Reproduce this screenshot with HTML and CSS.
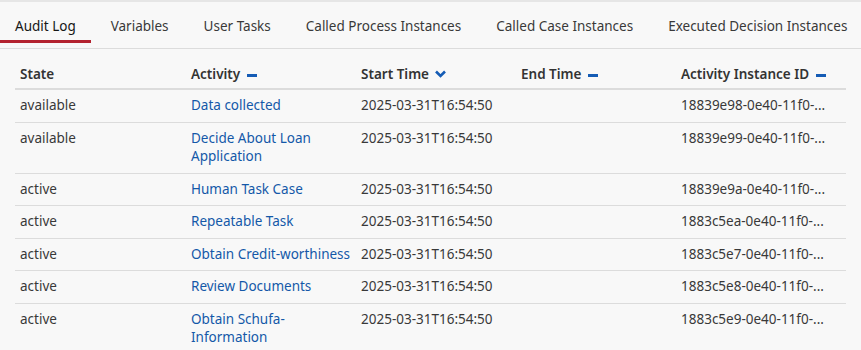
FILE: index.html
```html
<!doctype html>
<html>
<head>
<meta charset="UTF-8">
<meta name="viewport" content="width=device-width, initial-scale=1">
<link rel="stylesheet" href="styles.css">
</head>
<body>
<div class="tabs">
  <a class="tab active">Audit Log</a>
  <a class="tab">Variables</a>
  <a class="tab">User Tasks</a>
  <a class="tab">Called Process Instances</a>
  <a class="tab">Called Case Instances</a>
  <a class="tab">Executed Decision Instances</a>
</div>
<div class="panel">
<table class="log">
  <thead>
    <tr>
      <th class="col-state">State</th>
      <th class="col-activity">Activity <span class="sort-none"></span></th>
      <th class="col-start">Start Time <svg class="sort-desc" width="11" height="8" viewBox="0 0 11 8"><path d="M1 1.5 L5.5 6 L10 1.5" fill="none" stroke="#155cb5" stroke-width="2.6"/></svg></th>
      <th class="col-end">End Time <span class="sort-none"></span></th>
      <th>Activity Instance ID <span class="sort-none"></span></th>
    </tr>
  </thead>
  <tbody>
    <tr><td>available</td><td><a>Data collected</a></td><td>2025-03-31T16:54:50</td><td></td><td>18839e98-0e40-11f0-...</td></tr>
    <tr><td>available</td><td><a>Decide About Loan Application</a></td><td>2025-03-31T16:54:50</td><td></td><td>18839e99-0e40-11f0-...</td></tr>
    <tr><td>active</td><td><a>Human Task Case</a></td><td>2025-03-31T16:54:50</td><td></td><td>18839e9a-0e40-11f0-...</td></tr>
    <tr><td>active</td><td><a>Repeatable Task</a></td><td>2025-03-31T16:54:50</td><td></td><td>1883c5ea-0e40-11f0-...</td></tr>
    <tr><td>active</td><td><a>Obtain Credit-worthiness</a></td><td>2025-03-31T16:54:50</td><td></td><td>1883c5e7-0e40-11f0-...</td></tr>
    <tr><td>active</td><td><a>Review Documents</a></td><td>2025-03-31T16:54:50</td><td></td><td>1883c5e8-0e40-11f0-...</td></tr>
    <tr><td>active</td><td><a>Obtain Schufa-Information</a></td><td>2025-03-31T16:54:50</td><td></td><td>1883c5e9-0e40-11f0-...</td></tr>
  </tbody>
</table>
</div>
</body>
</html>
```

FILE: styles.css
```css
body{
  margin: 0;
  padding: 0;
  background: #f8f8f8;
  color: #393939;
  font-family: "Noto Sans", "Liberation Sans", sans-serif;
  font-size: 13.5px;
  border-top: 2px solid #e6e6e6;
}

.tabs{
  display: flex;
  height: 46px;
  border-bottom: 1px solid #dcdcdc;
  white-space: nowrap;
}

.tab{
  padding: 0 15px;
  margin-right: 5px;
  color: #393939;
  border-bottom: 3px solid transparent;
  box-sizing: border-box;
  height: 41px;
  line-height: 48px;
}

.tab.active{
  color: #161616;
  border-bottom-color: #b3222f;
}

.panel{
  padding: 0 15px;
}

.log{
  width: 831px;
  border-collapse: collapse;
  table-layout: fixed;
  margin-top: 11px;
}

.log th{
  text-align: left;
  font-weight: 600;
  color: #333;
  padding: 5px 5px 5px;
  border-bottom: 2px solid #dcdcdc;
  white-space: nowrap;
}

.col-state{ width: 161px; }
.col-activity{ width: 160px; }
.col-start{ width: 150px; }
.col-end{ width: 150px; }

.log td{
  vertical-align: top;
  padding: 6px 5px 7px;
  line-height: 18.5px;
  border-bottom: 1px solid #dcdcdc;
}

.log tbody tr:last-child td{
  border-bottom: none;
}

.log a{
  color: #1458a8;
}

.sort-none{
  display: inline-block;
  width: 10px;
  height: 3px;
  background: #155cb5;
  vertical-align: middle;
  margin-left: 3px;
}

.sort-desc{
  margin-left: 2px;
  vertical-align: 1px;
}
```
